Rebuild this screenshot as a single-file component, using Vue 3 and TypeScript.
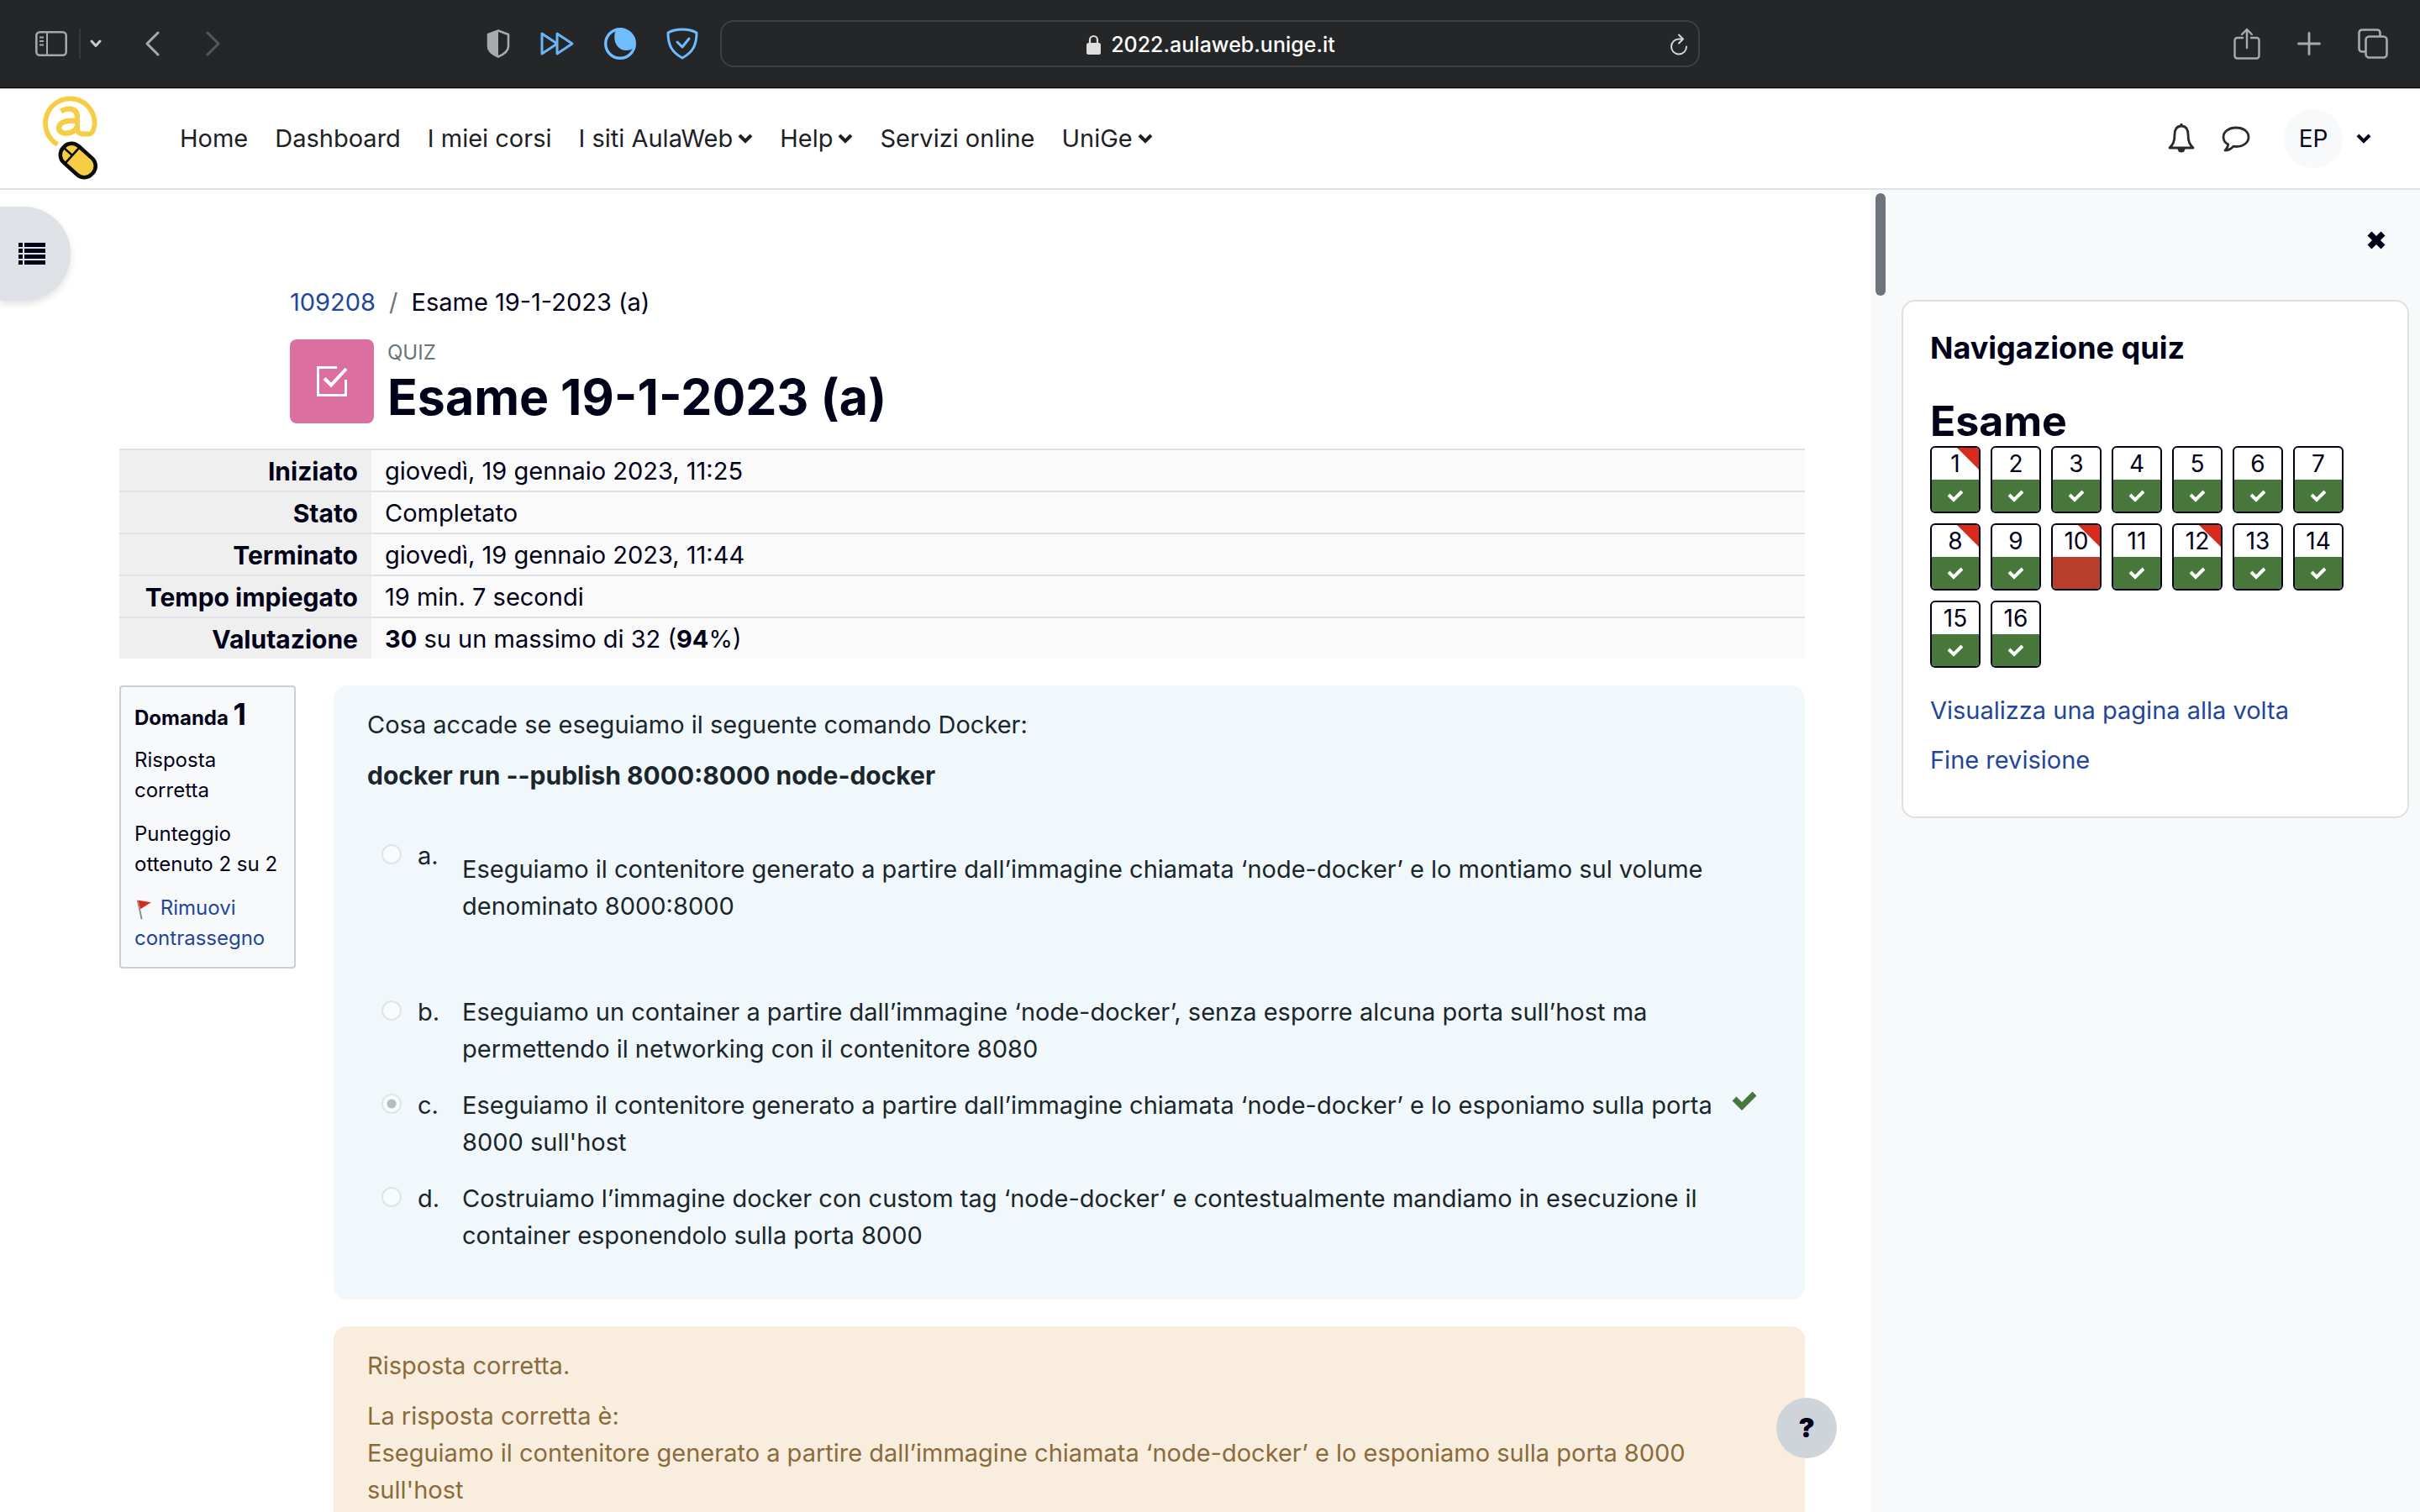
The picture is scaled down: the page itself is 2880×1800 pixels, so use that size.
<script setup lang="ts">
import { ref } from 'vue'

interface MenuItem {
  label: string
  dropdown?: boolean
}

interface Answer {
  letter: string
  text: string
  spaced?: boolean
  correct?: boolean
}

interface QuizSlot {
  number: number
  flagged: boolean
  correct: boolean
}

const menu: MenuItem[] = [
  { label: 'Home' },
  { label: 'Dashboard' },
  { label: 'I miei corsi' },
  { label: 'I siti AulaWeb', dropdown: true },
  { label: 'Help', dropdown: true },
  { label: 'Servizi online' },
  { label: 'UniGe', dropdown: true },
]

const answers: Answer[] = [
  {
    letter: 'a',
    text: 'Eseguiamo il contenitore generato a partire dall’immagine chiamata ‘node-docker’ e lo montiamo sul volume denominato 8000:8000',
    spaced: true,
  },
  {
    letter: 'b',
    text: 'Eseguiamo un container a partire dall’immagine ‘node-docker’, senza esporre alcuna porta sull’host ma permettendo il networking con il contenitore 8080',
  },
  {
    letter: 'c',
    text: "Eseguiamo il contenitore generato a partire dall’immagine chiamata ‘node-docker’ e lo esponiamo sulla porta 8000 sull'host",
    correct: true,
  },
  {
    letter: 'd',
    text: 'Costruiamo l’immagine docker con custom tag ‘node-docker’ e contestualmente mandiamo in esecuzione il container esponendolo sulla porta 8000',
  },
]

const selected = ref('c')

const flagged = [1, 8, 10, 12]
const slots: QuizSlot[] = Array.from({ length: 16 }, (_, i) => ({
  number: i + 1,
  flagged: flagged.includes(i + 1),
  correct: i + 1 !== 10,
}))
</script>

<template>
  <div class="browser">
    <header class="toolbar">
      <div class="toolbar-left">
        <button class="tool sidebar-tool" aria-label="Barra laterale">
          <svg width="38" height="30" viewBox="0 0 38 30" fill="none" stroke="#a5a6a8" stroke-width="2.6">
            <rect x="1.3" y="1.3" width="35.4" height="27.4" rx="4" />
            <path d="M14 1v28M5 7.500h5M5 12h5M5 16.500h5" stroke-width="2" />
          </svg>
        </button>
        <span class="divider"></span>
        <button class="tool groups-tool" aria-label="Gruppi di pannelli">
          <svg width="14" height="10" viewBox="0 0 14 10" fill="none" stroke="#c9cacb" stroke-width="3" stroke-linecap="round" stroke-linejoin="round">
            <path d="M2 2l5 5.500 5-5.500" />
          </svg>
        </button>
        <button class="tool back-tool" aria-label="Indietro">
          <svg width="17" height="30" viewBox="0 0 17 30" fill="none" stroke="#a9aaac" stroke-width="3" stroke-linecap="round" stroke-linejoin="round">
            <path d="M15 2L2 15l13 13" />
          </svg>
        </button>
        <button class="tool forward-tool" aria-label="Avanti">
          <svg width="17" height="30" viewBox="0 0 17 30" fill="none" stroke="#56575a" stroke-width="3" stroke-linecap="round" stroke-linejoin="round">
            <path d="M2 2l13 13L2 28" />
          </svg>
        </button>
        <div class="extensions">
          <button class="tool" aria-label="Rapporto sulla privacy">
            <svg width="28" height="34" viewBox="0 0 28 34">
              <path d="M14 1.500L26 6v14c0 5-5 9.500-12 12.500C7 29.500 2 25 2 20V6z" fill="none" stroke="#a9aaac" stroke-width="2.600" stroke-linejoin="round" />
              <path d="M14 1L1 5.500V20c0 6 6 10.500 13 13.500z" fill="#a9aaac" />
            </svg>
          </button>
          <button class="tool" aria-label="Velocizza">
            <svg width="40" height="30" viewBox="0 0 40 30" fill="none" stroke="#6ab4f8" stroke-width="3" stroke-linejoin="round">
              <path d="M2 3v24l18-12zM20 3v24l18-12z" />
            </svg>
          </button>
          <button class="tool" aria-label="Modalità scura">
            <svg width="38" height="38" viewBox="0 0 38 38">
              <circle cx="19" cy="19" r="17.300" fill="none" stroke="#6fbdff" stroke-width="3.400" />
              <path d="M14 3C9 14 15 27 26 27c4 0 7-1 9.500-4A17 17 0 0 0 14 3z" fill="#6fbdff" />
            </svg>
          </button>
          <button class="tool" aria-label="Protezione">
            <svg width="38" height="38" viewBox="0 0 38 38" fill="none" stroke="#6fbdff" stroke-width="3" stroke-linejoin="round" stroke-linecap="round">
              <path d="M19 2c6 0 12 1 17 4 0 14-4 23-17 30C6 29 2 20 2 6c5-3 11-4 17-4z" />
              <path d="M13 17l6 6 8-10" />
            </svg>
          </button>
        </div>
      </div>

      <div class="address">
        <div class="address-text">
          <svg width="17" height="24" viewBox="0 0 17 24">
            <path d="M4 11V6.500a4.500 4.500 0 0 1 9 0V11" fill="none" stroke="#dededf" stroke-width="2.200" />
            <rect x="0" y="10" width="17" height="14" rx="2.500" fill="#dededf" />
          </svg>
          <span>2022.aulaweb.unige.it</span>
        </div>
        <button class="tool reload" aria-label="Ricarica">
          <svg width="22" height="27" viewBox="0 0 22 27" fill="none" stroke="#d5d6d7" stroke-width="2" stroke-linecap="round" stroke-linejoin="round">
            <path d="M20 15.500a9 9 0 1 1-9-9h4M11 1.500l5 5-5 5" />
          </svg>
        </button>
      </div>

      <div class="toolbar-right">
        <button class="tool share" aria-label="Condividi">
          <svg width="32" height="38" viewBox="0 0 32 38" fill="none" stroke="#a9aaac" stroke-width="2.400" stroke-linecap="round" stroke-linejoin="round">
            <path d="M11 12H4.500A3 3 0 0 0 1.500 15v18.500a3 3 0 0 0 3 3h23a3 3 0 0 0 3-3V15a3 3 0 0 0-3-3H21M16 24V2M10 8l6-6 6 6" />
          </svg>
        </button>
        <button class="tool" aria-label="Nuovo pannello">
          <svg width="28" height="28" viewBox="0 0 28 28" fill="none" stroke="#a9aaac" stroke-width="2.800" stroke-linecap="round">
            <path d="M14 1.500v25M1.500 14h25" />
          </svg>
        </button>
        <button class="tool" aria-label="Panoramica pannelli">
          <svg width="36" height="36" viewBox="0 0 36 36" fill="none" stroke="#a9aaac" stroke-width="2.600" stroke-linejoin="round">
            <rect x="9.500" y="9.500" width="25" height="25" rx="4" />
            <path d="M9 27.500H5a3.500 3.500 0 0 1-3.500-3.500V5A3.500 3.500 0 0 1 5 1.500h18A3.500 3.500 0 0 1 26.500 5v4" />
          </svg>
        </button>
      </div>
    </header>

    <nav class="navbar">
      <a class="logo" href="#" aria-label="AulaWeb">
        <svg width="70" height="104" viewBox="0 0 70 104">
          <path d="M19.500 59A29.300 29.300 0 1 1 63.500 36C62.500 42 61 46.500 57 46.500H49Q43 46 43 40V26" fill="none" stroke="#f6ce46" stroke-width="5.800" />
          <path d="M23.500 19.500C31 15 43 15 43 26M43 30.500C31 30 21 32 21 39.500c0 8.500 18 8.500 22-2" fill="none" stroke="#f6ce46" stroke-width="6.400" />
          <g transform="rotate(-48 43.700 78)">
            <rect x="30.500" y="54.800" width="26.500" height="46.500" rx="12.500" fill="#f6ce46" stroke="#0b0b0b" stroke-width="4.500" />
            <path d="M31 69h26M43.700 56v13" fill="none" stroke="#0b0b0b" stroke-width="2.600" />
          </g>
        </svg>
      </a>
      <ul class="menu">
        <li v-for="item in menu" :key="item.label">
          <a href="#">
            {{ item.label }}
            <svg v-if="item.dropdown" width="18" height="12" viewBox="0 0 18 12" fill="none" stroke="#1d2125" stroke-width="4" stroke-linejoin="miter">
              <path d="M2 2l7 7 7-7" />
            </svg>
          </a>
        </li>
      </ul>
      <div class="user-tools">
        <button class="tool" aria-label="Notifiche">
          <svg width="32" height="36" viewBox="0 0 32 36" fill="none" stroke="#2b2b2b" stroke-width="2.800" stroke-linejoin="round">
            <path d="M16 3c6 0 8 5 8 10 0 9 2 12 6 16H2c4-4 6-7 6-16 0-5 2-10 8-10z" />
            <path d="M16 0v4" />
            <path d="M11.500 30a4.500 4.500 0 0 0 9 0z" fill="#2b2b2b" stroke="none" />
          </svg>
        </button>
        <button class="tool" aria-label="Messaggi">
          <svg width="34" height="32" viewBox="0 0 34 32" fill="none" stroke="#2b2b2b" stroke-width="2.800" stroke-linejoin="round">
            <path d="M17 3c9 0 15 4.800 15 11.200S26 25.500 17.500 25.500c-1.500 0-2.500-.1-3.500-.3-3 3-6.500 4.800-10 4.800 2.500-2.300 3.500-4.600 3.800-7C4 21 2 18 2 14.200 2 7.800 8.500 3 17 3z" />
          </svg>
        </button>
        <button class="tool account">
          <span class="avatar">EP</span>
          <svg width="18" height="12" viewBox="0 0 18 12" fill="none" stroke="#010119" stroke-width="4">
            <path d="M2 2l7 7 7-7" />
          </svg>
        </button>
      </div>
    </nav>

    <div class="page">
      <main class="content">
        <button class="index-toggle" aria-label="Apri indice del corso">
          <svg width="32" height="26" viewBox="0 0 32 26" fill="#010119">
            <path d="M0 0h5v5H0zM7 0h25v5H7zM0 7h5v5H0zM7 7h25v5H7zM0 14h5v5H0zM7 14h25v5H7zM0 21h5v5H0zM7 21h25v5H7z" />
          </svg>
        </button>

        <div class="heading">
          <ol class="breadcrumb">
            <li><a href="#">109208</a></li>
            <li class="slash">/</li>
            <li>Esame 19-1-2023 (a)</li>
          </ol>
          <div class="title-row">
            <div class="activity-icon">
              <svg width="38" height="38" viewBox="0 0 38 38" fill="none" stroke="#fff" stroke-width="3">
                <path d="M25 2.500H2.500v33h33V17" />
                <path d="M10 15.500l8 8L36 4" stroke-width="4" />
              </svg>
            </div>
            <div>
              <p class="activity-type">QUIZ</p>
              <h1>Esame 19-1-2023 (a)</h1>
            </div>
          </div>
        </div>

        <table class="summary">
          <tbody>
            <tr><th scope="row">Iniziato</th><td>giovedì, 19 gennaio 2023, 11:25</td></tr>
            <tr><th scope="row">Stato</th><td>Completato</td></tr>
            <tr><th scope="row">Terminato</th><td>giovedì, 19 gennaio 2023, 11:44</td></tr>
            <tr><th scope="row">Tempo impiegato</th><td>19 min. 7 secondi</td></tr>
            <tr><th scope="row">Valutazione</th><td><b>30</b> su un massimo di 32 (<b>94</b>%)</td></tr>
          </tbody>
        </table>

        <section class="question">
          <aside class="info">
            <h3>Domanda <span>1</span></h3>
            <p>Risposta corretta</p>
            <p>Punteggio ottenuto 2 su 2</p>
            <p>
              <a href="#">
                <svg width="22" height="30" viewBox="0 0 22 30">
                  <path d="M2 1l6 28" stroke="#8c8c8c" stroke-width="2.400" fill="none" />
                  <path d="M3 1l19 3L6 14z" fill="#d92b1c" />
                </svg>
                Rimuovi contrassegno</a>
            </p>
          </aside>

          <div class="body">
            <div class="formulation">
              <p>Cosa accade se eseguiamo il seguente comando Docker:</p>
              <p class="command"><b>docker run --publish 8000:8000 node-docker</b></p>
              <ul class="answers">
                <li v-for="a in answers" :key="a.letter" :class="{ spaced: a.spaced }">
                  <input :id="'answer-' + a.letter" v-model="selected" type="radio" name="answer" :value="a.letter" disabled />
                  <label :for="'answer-' + a.letter">
                    <span class="letter">{{ a.letter }}.</span>
                    <span class="answer-text">{{ a.text }}</span>
                  </label>
                  <svg v-if="a.correct" class="tick" width="30" height="24" viewBox="0 0 30 24" fill="none" stroke="#47773a" stroke-width="7">
                    <path d="M3 10l9 9L27 4" />
                  </svg>
                </li>
              </ul>
            </div>
            <div class="feedback">
              <p>Risposta corretta.</p>
              <p>La risposta corretta è:<br />Eseguiamo il contenitore generato a partire dall’immagine chiamata ‘node-docker’ e lo esponiamo sulla porta 8000 sull'host</p>
            </div>
          </div>
        </section>

        <button class="help">?</button>
      </main>

      <aside class="drawer">
        <span class="scroll-thumb"></span>
        <div class="drawer-header">
          <button class="tool" aria-label="Chiudi">
            <svg width="22" height="22" viewBox="0 0 22 22" fill="none" stroke="#010119" stroke-width="7">
              <path d="M3 3l16 16M19 3L3 19" />
            </svg>
          </button>
        </div>
        <section class="card">
          <h2>Navigazione quiz</h2>
          <h3>Esame</h3>
          <div class="slots">
            <a v-for="s in slots" :key="s.number" href="#" class="slot" :class="{ flagged: s.flagged }">
              <span class="slot-number">{{ s.number }}</span>
              <span class="slot-state" :class="s.correct ? 'right' : 'wrong'">
                <svg v-if="s.correct" width="20" height="16" viewBox="0 0 20 16" fill="none" stroke="#fff" stroke-width="4">
                  <path d="M2 7l6 6L18 3" />
                </svg>
              </span>
            </a>
          </div>
          <a class="nav-link" href="#">Visualizza una pagina alla volta</a>
          <a class="nav-link" href="#">Fine revisione</a>
        </section>
      </aside>
    </div>
  </div>
</template>

<style>
body {
  margin: 0;
  overflow: hidden;
}
</style>

<style scoped>
* {
  box-sizing: border-box;
}

.browser {
  display: flex;
  flex-direction: column;
  height: 100vh;
  background: #fff;
  color: #010119;
  font-family: Inter, "Liberation Sans", sans-serif;
  font-size: 29px;
  line-height: 44px;
}

p, h1, h2, h3, ul, ol {
  margin: 0;
  padding: 0;
}

ul, ol {
  list-style: none;
}

a {
  color: #21469b;
  text-decoration: none;
}

svg {
  display: block;
  flex: none;
}

button {
  font: inherit;
  color: inherit;
}

.tool {
  display: flex;
  align-items: center;
  padding: 0;
  border: 0;
  background: none;
}

/* Browser toolbar */
.toolbar {
  flex: none;
  display: grid;
  grid-template-columns: 1fr minmax(0, 1166px) 1fr;
  align-items: center;
  height: 105px;
  border-bottom: 1px solid #000;
  background: #252628;
}

.toolbar-left {
  display: flex;
  align-items: center;
  padding: 0 26px 0 42px;
}

.divider {
  width: 2px;
  height: 36px;
  margin: 0 11px 0 14px;
  background: #37383a;
}

.back-tool {
  margin-left: 52px;
}

.forward-tool {
  margin-left: 55px;
}

.extensions {
  display: flex;
  align-items: center;
  gap: 36px;
  margin-left: auto;
}

.address {
  display: flex;
  align-items: center;
  height: 56px;
  padding: 2px 12px 0;
  border: 2px solid #3e3f41;
  border-radius: 16px;
}

.address-text {
  flex: 1;
  display: flex;
  align-items: center;
  justify-content: center;
  gap: 12px;
  padding-left: 24px;
  color: #fff;
  font-size: 25px;
  font-weight: 500;
}

.toolbar-right {
  display: flex;
  align-items: center;
  justify-content: flex-end;
  gap: 44px;
  padding-right: 38px;
}

/* Site navigation */
.navbar {
  flex: none;
  display: flex;
  align-items: center;
  height: 121px;
  padding: 0 58px 0 49px;
  border-top: 1px solid #c4c4c4;
  border-bottom: 2px solid #dee2e6;
}

.menu {
  display: flex;
  gap: 32px;
  margin-left: 95px;
}

.menu a {
  display: flex;
  align-items: center;
  gap: 6px;
  color: #1d2125;
}

.user-tools {
  display: flex;
  align-items: center;
  gap: 32px;
  margin-left: auto;
}

.account {
  gap: 16px;
  margin-left: 8px;
}

.avatar {
  width: 70px;
  height: 70px;
  border-radius: 50%;
  background: #f8f9fb;
  font-size: 28px;
  line-height: 70px;
  text-align: center;
}

/* Page */
.page {
  flex: 1;
  display: flex;
  min-height: 0;
}

.content {
  position: relative;
  flex: 1;
  min-width: 0;
  padding: 112px 78px 0 142px;
  overflow: hidden;
}

.index-toggle {
  position: absolute;
  left: 0;
  top: 20px;
  display: flex;
  align-items: center;
  width: 84px;
  height: 112px;
  padding: 0 0 0 22px;
  border: 0;
  border-radius: 0 56px 56px 0;
  background: #dee2e6;
  box-shadow: 0 4px 8px rgba(0, 0, 0, 0.12);
}

.heading {
  margin: 0 203px 27px;
}

.breadcrumb {
  display: flex;
  gap: 16px;
}

.slash {
  color: #6a737b;
}

.title-row {
  display: flex;
  align-items: center;
  gap: 16px;
  margin-top: 19px;
}

.activity-icon {
  display: flex;
  align-items: center;
  justify-content: center;
  width: 100px;
  height: 100px;
  border-radius: 8px;
  background: #da6fa0;
}

.activity-type {
  color: #6a737b;
  font-size: 24px;
  line-height: 38px;
}

h1 {
  font-size: 59px;
  line-height: 68px;
}

.summary {
  width: 100%;
  border-spacing: 0;
}

.summary th,
.summary td {
  height: 50px;
  padding: 2px 16px 0;
  border-top: 2px solid #dee2e6;
  line-height: 46px;
}

.summary th {
  width: 300px;
  background: #efefef;
  font-size: 30px;
  text-align: right;
}

.summary td {
  background: #fafafa;
}

.question {
  display: flex;
  align-items: flex-start;
  gap: 45px;
  margin-top: 32px;
}

.info {
  flex: none;
  width: 210px;
  padding: 14px 16px 16px;
  border: 2px solid #cad0d7;
  border-radius: 4px;
  background: #f8f9fa;
  font-size: 24px;
  line-height: 36px;
}

.info h3 {
  font-size: 24px;
  line-height: 36px;
}

.info h3 span {
  font-size: 36px;
}

.info p {
  margin-top: 16px;
}

.info h3 + p {
  margin-top: 14px;
}

.info svg {
  display: inline-block;
  height: 24px;
  margin-right: 2px;
  vertical-align: -6px;
}

.body {
  flex: 1;
  min-width: 0;
}

.formulation,
.feedback {
  padding: 25px 40px;
  border-radius: 16px;
}

.formulation {
  padding-bottom: 54px;
  background: #f0f8fc;
  color: #1a262b;
}

.formulation p + p,
.feedback p + p {
  margin-top: 16px;
}

.command {
  font-size: 30px;
}

.feedback {
  margin-top: 32px;
  background: #f9eddd;
  color: #896b3e;
}

.answers {
  display: flex;
  flex-direction: column;
  gap: 23px;
  margin-top: 52px;
}

.answers li {
  display: flex;
  align-items: flex-start;
  padding-left: 17px;
}

.answers input {
  appearance: none;
  flex: none;
  width: 24px;
  height: 24px;
  margin: 8px 19px 0 0;
  border: 2px solid #dfe4e7;
  border-radius: 50%;
  background: #f9fcfe;
}

.answers input:checked {
  background: radial-gradient(circle, #b9bcbe 0 5px, #f9fcfe 6px);
}

.answers label {
  display: flex;
  min-width: 0;
  max-width: 1546px;
}

.letter {
  flex: none;
  width: 53px;
}

.spaced .answer-text {
  padding: 16px 0 59px;
}

.tick {
  margin: 4px 0 0 18px;
}

.help {
  position: absolute;
  right: 40px;
  bottom: 64px;
  width: 72px;
  height: 72px;
  padding: 0;
  border: 0;
  border-radius: 50%;
  background: #ced4da;
  font-size: 32px;
  font-weight: 900;
}

/* Quiz drawer */
.drawer {
  position: relative;
  flex: none;
  width: 654px;
  padding: 0 13px 0 37px;
  background: #f8f9fb;
}

.scroll-thumb {
  position: absolute;
  left: 6px;
  top: 4px;
  width: 12px;
  height: 122px;
  border-radius: 6px;
  background: #6d747c;
}

.drawer-header {
  display: flex;
  justify-content: flex-end;
  height: 131px;
  padding: 0 28px 12px 0;
}

.card {
  padding: 33px 32px 45px;
  border: 2px solid #dfe0e2;
  border-radius: 16px;
  background: #fff;
}

.card h2 {
  font-size: 36px;
  line-height: 44px;
}

.card h3 {
  margin-top: 37px;
  font-size: 50px;
  line-height: 56px;
}

.slots {
  display: flex;
  flex-wrap: wrap;
  gap: 12px;
  margin: 2px 0 29px;
}

.slot {
  position: relative;
  display: flex;
  flex-direction: column;
  width: 60px;
  height: 80px;
  border: 2px solid #010119;
  border-radius: 6px;
  overflow: hidden;
  color: #010119;
  font-size: 28px;
  text-align: center;
}

.flagged::before {
  content: "";
  position: absolute;
  top: 0;
  right: 0;
  border-top: 26px solid #d92b1c;
  border-left: 26px solid transparent;
}

.slot-number {
  position: relative;
  height: 38px;
  line-height: 38px;
}

.slot-state {
  flex: 1;
  display: flex;
  align-items: center;
  justify-content: center;
}

.right {
  background: #47773a;
}

.wrong {
  background: #b83e2c;
}

.nav-link {
  display: block;
}

.nav-link + .nav-link {
  margin-top: 15px;
}
</style>
